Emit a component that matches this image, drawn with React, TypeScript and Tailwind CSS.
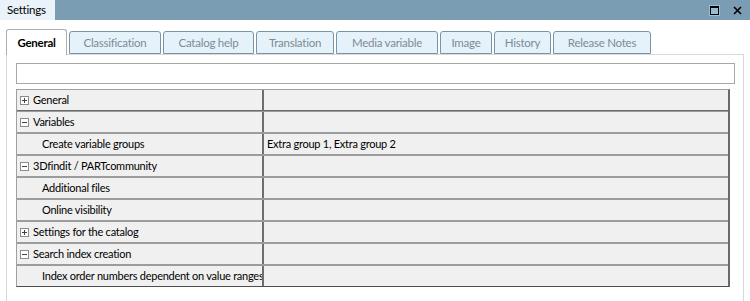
import React from "react";

const tabs = [
  { label: "General", w: 61, active: true },
  { label: "Classification", w: 92 },
  { label: "Catalog help", w: 91 },
  { label: "Translation", w: 78 },
  { label: "Media variable", w: 102 },
  { label: "Image", w: 52 },
  { label: "History", w: 57 },
  { label: "Release Notes", w: 98 },
];

type Row = { label: string; kind: "plus" | "minus" | "item"; value?: string };
const rows: Row[] = [
  { label: "General", kind: "plus" },
  { label: "Variables", kind: "minus" },
  { label: "Create variable groups", kind: "item", value: "Extra group 1, Extra group 2" },
  { label: "3Dfindit / PARTcommunity", kind: "minus" },
  { label: "Additional files", kind: "item" },
  { label: "Online visibility", kind: "item" },
  { label: "Settings for the catalog", kind: "plus" },
  { label: "Search index creation", kind: "minus" },
  { label: "Index order numbers dependent on value ranges", kind: "item" },
];

function Toggle({ plus }: { plus: boolean }) {
  return (
    <svg width="9" height="9" viewBox="0 0 9 9" className="shrink-0">
      <rect x="0.5" y="0.5" width="8" height="8" fill="#fff" stroke="#8c8c8c" />
      <line x1="2" y1="4.5" x2="7" y2="4.5" stroke="#444" />
      {plus && <line x1="4.5" y1="2" x2="4.5" y2="7" stroke="#444" />}
    </svg>
  );
}

export default function App() {
  return (
    <div
      className="w-[750px] h-[301px] bg-white overflow-hidden flex flex-col text-[11px] tracking-[-0.25px] text-black"
      style={{ fontFamily: 'Lato, "Noto Sans", sans-serif' }}
    >
      {/* title bar */}
      <div className="h-[20px] flex bg-[#7b9db3] shrink-0">
        <div className="w-[55px] bg-[#eaf3f9] pl-[7px] leading-[20px] text-[11.5px]">Settings</div>
        <div className="flex-1" />
        <div className="flex items-center gap-[13px] pr-[8px]">
          <svg width="11" height="11" viewBox="0 0 11 11">
            <rect x="0" y="0" width="11" height="11" fill="#a9d2ea" opacity="0.6" />
            <rect x="1.5" y="1.5" width="8" height="8" fill="none" stroke="#000" />
            <line x1="1.5" y1="2.5" x2="9.5" y2="2.5" stroke="#000" />
          </svg>
          <svg width="9" height="9" viewBox="0 0 9 9">
            <path d="M1 1 L8 8 M8 1 L1 8" stroke="#000" strokeWidth="1.6" />
          </svg>
        </div>
      </div>

      {/* tabs */}
      <div className="flex items-end gap-[2px] pl-[6px] pt-[9px] shrink-0 relative z-10">
        {tabs.map((t) =>
          t.active ? (
            <div
              key={t.label}
              style={{ width: t.w }}
              className="h-[26px] -mb-px bg-white border border-b-0 border-[#adadad] rounded-t-[3px] flex items-center justify-center font-bold text-[11.5px]"
            >
              {t.label}
            </div>
          ) : (
            <div
              key={t.label}
              style={{ width: t.w }}
              className="h-[23px] bg-[#e6f2f9] border border-[#7895a8] rounded-t-[3px] flex items-center justify-center text-[#7b8b98] text-[11.5px]"
            >
              {t.label}
            </div>
          )
        )}
      </div>

      {/* panel */}
      <div className="flex-1 mx-[6px] border border-b-0 border-[#d9d9d9] pt-[8px] pl-[9px] pr-[8px] flex flex-col">
        <div className="h-[21px] border border-[#a8a8a8] bg-white shrink-0" />
        <div className="mt-[5px] mr-[5px] border-t border-l border-[#a0a0a0] border-r-2 border-r-[#6a6a6a] border-b border-b-[#4f4f4f]">
          {rows.map((r, i) => (
            <div
              key={i}
              className={`flex bg-[#f0f0f0] ${i > 0 ? "border-t border-[#9c9c9c]" : ""} ${
                i < rows.length - 1 ? "border-b border-[#6b6b6b]" : ""
              }`}
              style={{ height: i === 0 || i === rows.length - 1 ? 21 : 22 }}
            >
              <div className="w-[247px] shrink-0 border-r-2 border-[#6e6e6e] flex items-center overflow-hidden whitespace-nowrap pt-[1px]">
                {r.kind === "item" ? (
                  <span className="pl-[25px]">{r.label}</span>
                ) : (
                  <span className="pl-[3px] flex items-center gap-[4px]">
                    <Toggle plus={r.kind === "plus"} />
                    <span>{r.label}</span>
                  </span>
                )}
              </div>
              <div className="flex-1 flex items-center pl-[3px] whitespace-nowrap pt-[1px]">{r.value ?? ""}</div>
            </div>
          ))}
        </div>
      </div>
    </div>
  );
}
